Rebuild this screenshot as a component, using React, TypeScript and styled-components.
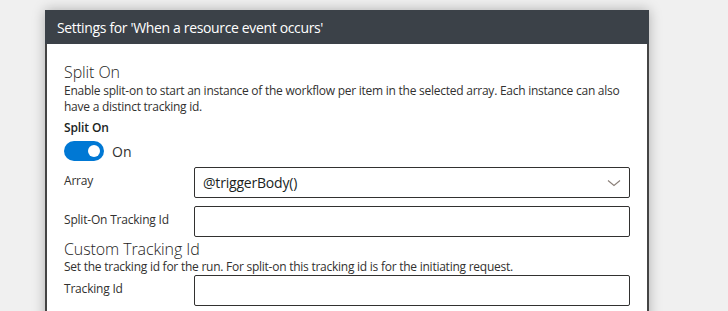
import React from "react"
import styled, { createGlobalStyle } from "styled-components"

const GlobalStyle = createGlobalStyle`
  html, body {
    margin: 0;
    padding: 0;
    background: #f0f0f0;
    overflow: hidden;
  }
  body {
    font-family: "Open Sans", "Noto Sans", sans-serif;
    color: #323130;
  }
`

const Page = styled.div`
  width: 728px;
  height: 311px;
  padding: 10px 0 0 45px;
  box-sizing: border-box;
  overflow: hidden;
`

const Panel = styled.div`
  width: 604px;
  height: 320px;
  box-sizing: border-box;
  border: 2px solid #444;
  border-top: none;
  background: #fff;
  box-shadow: 0 0 12px rgba(0, 0, 0, 0.28);
  display: flex;
  flex-direction: column;
`

const Header = styled.div`
  height: 34px;
  margin: 0 -2px;
  background: #3b4148;
  color: #fff;
  font-size: 14px;
  letter-spacing: -0.35px;
  display: flex;
  align-items: center;
  padding-left: 12px;
  padding-top: 1px;
  box-sizing: border-box;
`

const Body = styled.div`
  padding: 17px 17px 0 17px;
  display: flex;
  flex-direction: column;
`

const SectionTitle = styled.div<{ $shift?: number }>`
  font-size: 16px;
  font-weight: 300;
  letter-spacing: -0.1px;
  line-height: ${(p) => 22 - (p.$shift ?? 0)}px;
  padding-top: ${(p) => p.$shift ?? 0}px;
  color: #252423;
`

const Description = styled.div`
  font-size: 12px;
  letter-spacing: -0.25px;
  line-height: 16px;
  color: #323130;
`

const BoldLabel = styled.div`
  font-size: 12px;
  font-weight: 600;
  letter-spacing: -0.1px;
  line-height: 16px;
  margin-top: 5px;
  color: #201f1e;
`

const ToggleRow = styled.div`
  display: flex;
  align-items: center;
  gap: 8px;
  margin-top: 5px;
  height: 20px;
  font-size: 14px;
`

const Toggle = styled.div`
  width: 40px;
  height: 20px;
  border-radius: 10px;
  background: #0078d4;
  position: relative;
  &::after {
    content: "";
    position: absolute;
    right: 4px;
    top: 4px;
    width: 12px;
    height: 12px;
    border-radius: 50%;
    background: #fff;
  }
`

const FieldRow = styled.div<{ $gap?: number }>`
  display: grid;
  grid-template-columns: 130px 436px;
  margin-top: ${(p) => p.$gap ?? 8}px;
`

const FieldLabel = styled.div`
  font-size: 12px;
  letter-spacing: -0.2px;
  line-height: 16px;
  padding-top: 6px;
  color: #323130;
`

const Input = styled.div`
  height: 31px;
  box-sizing: border-box;
  border: 1px solid #323130;
  border-radius: 2px;
  display: flex;
  align-items: center;
  justify-content: space-between;
  padding: 0 8px 0 8px;
  font-size: 14px;
  letter-spacing: -0.2px;
  color: #201f1e;
`

const Chevron = () => (
  <svg width="14" height="8" viewBox="0 0 14 8">
    <path d="M1 1.5 L7 6.5 L13 1.5" fill="none" stroke="#8a7f78" strokeWidth="1.1" />
  </svg>
)

export default function App() {
  return (
    <>
      <GlobalStyle />
      <Page>
        <Panel>
          <Header>Settings for 'When a resource event occurs'</Header>
          <Body>
            <SectionTitle>Split On</SectionTitle>
            <Description>
              Enable split-on to start an instance of the workflow per item in the selected array. Each instance can also
              have a distinct tracking id.
            </Description>
            <BoldLabel>Split On</BoldLabel>
            <ToggleRow>
              <Toggle />
              <span>On</span>
            </ToggleRow>
            <FieldRow $gap={6}>
              <FieldLabel>Array</FieldLabel>
              <Input>
                <span>@triggerBody()</span>
                <Chevron />
              </Input>
            </FieldRow>
            <FieldRow>
              <FieldLabel>Split-On Tracking Id</FieldLabel>
              <Input />
            </FieldRow>
            <SectionTitle $shift={2}>Custom Tracking Id</SectionTitle>
            <Description>Set the tracking id for the run. For split-on this tracking id is for the initiating request.</Description>
            <FieldRow $gap={0}>
              <FieldLabel>Tracking Id</FieldLabel>
              <Input />
            </FieldRow>
          </Body>
        </Panel>
      </Page>
    </>
  )
}
